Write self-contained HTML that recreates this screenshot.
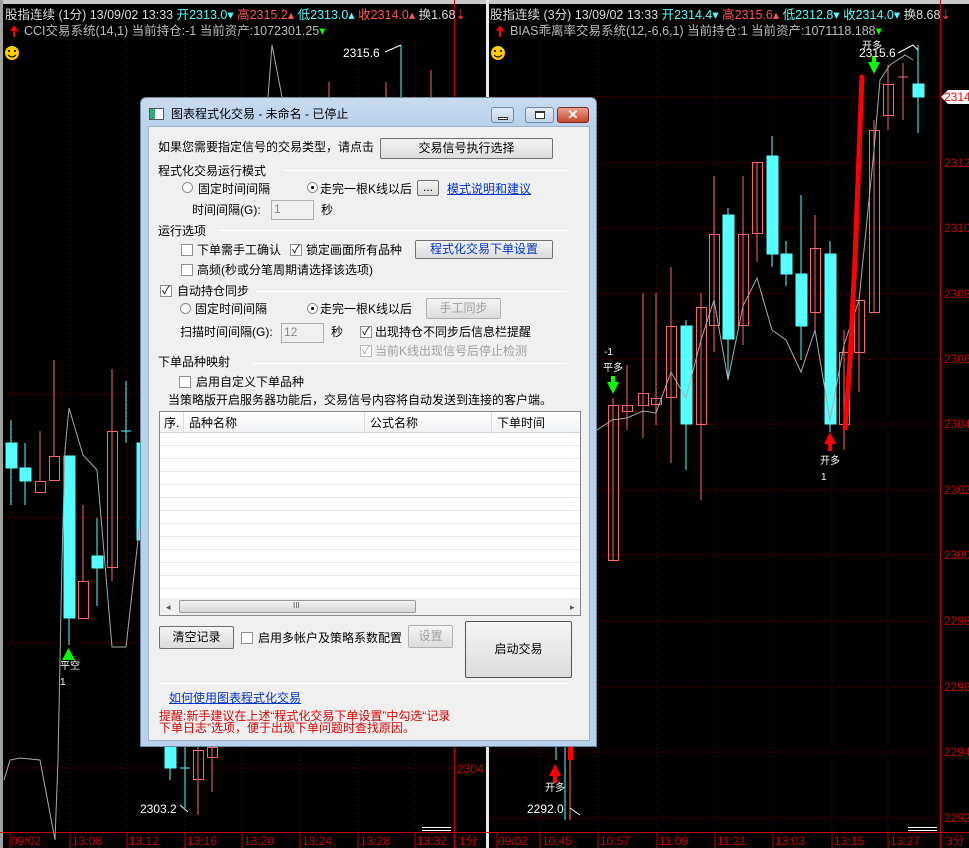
<!DOCTYPE html>
<html><head><meta charset="utf-8">
<style>
*{margin:0;padding:0;box-sizing:border-box}
body{width:969px;height:848px;overflow:hidden;background:#000;font-family:"Liberation Sans","Noto Sans CJK SC","WenQuanYi Zen Hei",sans-serif;font-size:12px;position:relative}
.a{position:absolute;white-space:nowrap;line-height:14px}
#dlg{position:absolute;left:140px;top:97px;width:457px;height:650px;background:linear-gradient(#c9dbee,#b9d1ea 30px,#b9d1ea);border:1px solid #6a8aa8;border-radius:6px 6px 0 0}
#cl{position:absolute;left:7px;top:28px;width:442px;height:615px;background:#f0f0f0;border:1px solid #9db3c9}
.btn{position:absolute;background:linear-gradient(#f4f4f4,#dcdcdc);border:1px solid #707070;border-radius:2px;text-align:center;line-height:18px;color:#000}
.dis{color:#a0a0a0;border-color:#adb2b5}
.cb{position:absolute;width:12px;height:12px;border:1px solid #8e8f8f;background:#fff;font-size:11px;line-height:10px;text-align:center;color:#000}
.rd{position:absolute;width:11px;height:11px;border:1px solid #8e8f8f;border-radius:50%;background:#fff}
.rd.on::after{content:"";position:absolute;left:3px;top:3px;width:3px;height:3px;border-radius:50%;background:#000}
.ln{position:absolute;height:1px;background:#c8c8c8;border-bottom:1px solid #fff}
.inp{position:absolute;background:#f0f0f0;border:1px solid #abadb3;color:#888;padding-left:2px;line-height:17px}
.lk{color:#0033cc;text-decoration:underline}
.wb{position:absolute;top:9px;height:16px;border:1px solid #6d8aa6;border-radius:3px;background:linear-gradient(#e3ecf6,#c0d2e6)}
</style></head><body>
<svg width="969" height="848" style="position:absolute;left:0;top:0">
<g stroke="#7a0000" stroke-dasharray="1,3" stroke-width="1">
<line x1="12" y1="40" x2="12" y2="830"/><line x1="70" y1="40" x2="70" y2="830"/><line x1="127" y1="40" x2="127" y2="830"/><line x1="185" y1="40" x2="185" y2="830"/><line x1="242" y1="40" x2="242" y2="830"/><line x1="300" y1="40" x2="300" y2="830"/><line x1="358" y1="40" x2="358" y2="830"/><line x1="415" y1="40" x2="415" y2="830"/>
<line x1="0" y1="394" x2="454" y2="394"/><line x1="0" y1="518" x2="454" y2="518"/><line x1="0" y1="643" x2="454" y2="643"/><line x1="0" y1="768" x2="454" y2="768"/>
<line x1="540" y1="40" x2="540" y2="830"/><line x1="598" y1="40" x2="598" y2="830"/><line x1="657" y1="40" x2="657" y2="830"/><line x1="715" y1="40" x2="715" y2="830"/><line x1="773" y1="40" x2="773" y2="830"/><line x1="832" y1="40" x2="832" y2="830"/><line x1="888" y1="40" x2="888" y2="830"/>
<line x1="490" y1="97" x2="940" y2="97"/><line x1="490" y1="163" x2="940" y2="163"/><line x1="490" y1="228" x2="940" y2="228"/><line x1="490" y1="294" x2="940" y2="294"/><line x1="490" y1="359" x2="940" y2="359"/><line x1="490" y1="424" x2="940" y2="424"/><line x1="490" y1="490" x2="940" y2="490"/><line x1="490" y1="555" x2="940" y2="555"/><line x1="490" y1="621" x2="940" y2="621"/><line x1="490" y1="687" x2="940" y2="687"/><line x1="490" y1="752" x2="940" y2="752"/><line x1="490" y1="818" x2="940" y2="818"/>
</g>
<rect x="0" y="0" width="969" height="4" fill="#c8c8c8"/>
<rect x="0" y="0" width="3" height="848" fill="#a0a0a0"/>
<rect x="486" y="0" width="3" height="848" fill="#e8e8e8"/>
<line x1="454.5" y1="0" x2="454.5" y2="848" stroke="#c00000"/>
<line x1="940.5" y1="0" x2="940.5" y2="848" stroke="#c00000"/>
<line x1="0" y1="832.5" x2="969" y2="832.5" stroke="#c00000"/>
<g stroke="#c00000"><line x1="10" y1="832" x2="10" y2="848"/><line x1="70" y1="832" x2="70" y2="848"/><line x1="127" y1="832" x2="127" y2="848"/><line x1="185" y1="832" x2="185" y2="848"/><line x1="242" y1="832" x2="242" y2="848"/><line x1="300" y1="832" x2="300" y2="848"/><line x1="358" y1="832" x2="358" y2="848"/><line x1="415" y1="832" x2="415" y2="848"/><line x1="497" y1="832" x2="497" y2="848"/><line x1="540" y1="832" x2="540" y2="848"/><line x1="598" y1="832" x2="598" y2="848"/><line x1="657" y1="832" x2="657" y2="848"/><line x1="715" y1="832" x2="715" y2="848"/><line x1="773" y1="832" x2="773" y2="848"/><line x1="832" y1="832" x2="832" y2="848"/><line x1="888" y1="832" x2="888" y2="848"/></g>
<g stroke="#fff" stroke-width="1"><line x1="422" y1="827.5" x2="451" y2="827.5"/><line x1="422" y1="830.5" x2="451" y2="830.5"/><line x1="908" y1="827.5" x2="937" y2="827.5"/><line x1="908" y1="830.5" x2="937" y2="830.5"/></g>
<!-- left candles -->
<g stroke="#5ff" fill="#5ff">
<line x1="11" y1="420" x2="11" y2="505"/><rect x="6" y="443" width="11" height="25"/>
<line x1="25" y1="443" x2="25" y2="505"/><rect x="20" y="468" width="11" height="13"/>
<line x1="69" y1="618" x2="69" y2="645"/><rect x="64" y="456" width="11" height="162"/>
<line x1="97" y1="518" x2="97" y2="606"/><rect x="92" y="556" width="11" height="12"/>
<line x1="126" y1="381" x2="126" y2="443"/><line x1="121" y1="431" x2="131" y2="431"/>
<rect x="137" y="443" width="3" height="97"/>
<line x1="170" y1="747" x2="170" y2="780"/><rect x="165" y="747" width="11" height="21"/>
<line x1="185" y1="747" x2="185" y2="808"/><line x1="180" y1="768" x2="190" y2="768"/>
<line x1="401" y1="45" x2="401" y2="97"/>
</g>
<g stroke="#f66" fill="none">
<line x1="40" y1="431" x2="40" y2="481"/><rect x="35.5" y="481.5" width="10" height="11"/>
<line x1="54" y1="360" x2="54" y2="456"/><rect x="49.5" y="456.5" width="10" height="24"/>
<line x1="83" y1="505" x2="83" y2="581"/><rect x="78.5" y="581.5" width="10" height="37"/>
<line x1="112" y1="369" x2="112" y2="581"/><rect x="107.5" y="431.5" width="10" height="136"/>
<line x1="198" y1="747" x2="198" y2="815"/><rect x="193.5" y="750.5" width="10" height="29"/>
<line x1="212" y1="747" x2="212" y2="792"/><rect x="207.5" y="747.5" width="10" height="10"/>
<line x1="329" y1="82" x2="329" y2="97"/><line x1="386" y1="82" x2="386" y2="97"/><line x1="431" y1="70" x2="431" y2="97"/>
</g>
<polyline fill="none" stroke="#aaa" points="4,780 10,760 20,758 40,760 55,840 58,760 62,560 65,450 69,408 83,455 97,470 112,647 126,647 138,540 140,520"/>
<polyline fill="none" stroke="#aaa" points="268,97 272,45 282,97"/>
<polyline fill="none" stroke="#fff" points="385,52 401,45"/>
<polyline fill="none" stroke="#fff" points="180,805 188,812"/>
<polygon points="62,660 75,660 68.5,648" fill="#0f0"/>
<!-- right candles -->
<g stroke="#f66" fill="none">
<line x1="613" y1="398" x2="613" y2="560"/><rect x="608.5" y="405.5" width="10" height="155"/>
<line x1="627" y1="365" x2="627" y2="430"/><rect x="622.5" y="405.5" width="10" height="6"/>
<line x1="643" y1="293" x2="643" y2="438"/><rect x="638.5" y="393.5" width="10" height="12"/>
<line x1="656" y1="293" x2="656" y2="425"/><rect x="651.5" y="398.5" width="10" height="6"/>
<line x1="671" y1="267" x2="671" y2="463"/><rect x="666.5" y="326.5" width="10" height="71"/>
<line x1="701" y1="293" x2="701" y2="500"/><rect x="696.5" y="307.5" width="10" height="117"/>
<line x1="714" y1="176" x2="714" y2="352"/><rect x="709.5" y="234.5" width="10" height="91"/>
<line x1="743" y1="176" x2="743" y2="345"/><rect x="738.5" y="234.5" width="10" height="91"/>
<line x1="757" y1="162" x2="757" y2="262"/><rect x="752.5" y="162.5" width="10" height="71"/>
<line x1="815" y1="215" x2="815" y2="330"/><rect x="810.5" y="248.5" width="10" height="64"/>
<line x1="844" y1="330" x2="844" y2="450"/><rect x="839.5" y="352.5" width="10" height="72"/>
<line x1="859" y1="300" x2="859" y2="392"/><rect x="854.5" y="300.5" width="10" height="52"/>
<line x1="874" y1="120" x2="874" y2="312"/><rect x="869.5" y="130.5" width="10" height="182"/>
<line x1="888" y1="65" x2="888" y2="130"/><rect x="883.5" y="84.5" width="10" height="31"/>
<line x1="903" y1="63" x2="903" y2="120"/><line x1="898" y1="77" x2="908" y2="77"/>
<line x1="570" y1="747" x2="570" y2="820"/>
</g>
<g stroke="#5ff" fill="#5ff">
<line x1="686" y1="320" x2="686" y2="470"/><rect x="681" y="326" width="11" height="98"/>
<line x1="728" y1="208" x2="728" y2="380"/><rect x="723" y="215" width="11" height="124"/>
<line x1="772" y1="136" x2="772" y2="267"/><rect x="767" y="156" width="11" height="98"/>
<line x1="786" y1="241" x2="786" y2="286"/><rect x="781" y="254" width="11" height="20"/>
<line x1="801" y1="195" x2="801" y2="360"/><rect x="796" y="274" width="11" height="52"/>
<line x1="830" y1="241" x2="830" y2="432"/><rect x="825" y="254" width="11" height="170"/>
<line x1="918" y1="45" x2="918" y2="133"/><rect x="913" y="84" width="11" height="13"/>
<line x1="556" y1="747" x2="556" y2="760"/><line x1="565" y1="747" x2="565" y2="820"/>
</g>
<rect x="568" y="747" width="5" height="13" fill="#f00"/>
<polyline fill="none" stroke="#aaa" points="597,430 612,420 627,418 643,411 656,413 671,372 686,398 701,340 714,300 728,380 743,306 757,278 772,330 786,340 801,372 815,330 830,420 844,345 859,300 874,150 880,80 890,65 905,55 913,60"/>
<polyline fill="none" stroke="#fff" points="898,53 913,45 918,50"/>
<polyline fill="none" stroke="#f00" stroke-width="5" points="845,430 850,360 855,260 862,75"/>
<polygon points="607,382 619,382 613,394" fill="#0f0"/><rect x="611" y="376" width="4" height="7" fill="#0f0"/>
<polygon points="868,62 880,62 874,74" fill="#0f0"/><rect x="872" y="56" width="4" height="7" fill="#0f0"/>
<polygon points="824,444 836,444 830,432" fill="#f00"/><rect x="828" y="443" width="4" height="8" fill="#f00"/>
<polygon points="549,776 561,776 555,764" fill="#f00"/><rect x="553" y="775" width="4" height="8" fill="#f00"/>
<polyline fill="none" stroke="#fff" points="570,808 580,815"/>
<polygon points="941,97 948,90 969,90 969,104 948,104" fill="#fff"/>
<circle cx="12" cy="53" r="7" fill="#fc0"/><circle cx="9" cy="51" r="1" fill="#000"/><circle cx="15" cy="51" r="1" fill="#000"/><path d="M8,55 Q12,59 16,55" stroke="#000" fill="none"/>
<circle cx="498" cy="53" r="7" fill="#fc0"/><circle cx="495" cy="51" r="1" fill="#000"/><circle cx="501" cy="51" r="1" fill="#000"/><path d="M494,55 Q498,59 502,55" stroke="#000" fill="none"/>
<path d="M14,37 L14,28 M11,31 L14,27 L17,31" stroke="#f00" stroke-width="2" fill="none"/>
<path d="M500,37 L500,28 M497,31 L500,27 L503,31" stroke="#f00" stroke-width="2" fill="none"/>
</svg>
<!-- headers -->
<div class="a" style="left:5px;top:8px;color:#ddd;font-size:12.5px">股指连续 (1分) 13/09/02 13:33 <span style="color:#5ff">开2313.0</span><span style="color:#5ff">▾</span> <span style="color:#f55">高2315.2▴</span> <span style="color:#5ff">低2313.0▴</span> <span style="color:#f55">收2314.0▴</span> 换1.68<span style="color:#f44">⇣</span></div>
<div class="a" style="left:24px;top:24px;color:#bbb;font-size:12.5px">CCI交易系统(14,1) 当前持仓:-1 当前资产:1072301.25<span style="color:#0f0">▾</span></div>
<div class="a" style="left:490px;top:8px;color:#ddd;font-size:12.5px">股指连续 (3分) 13/09/02 13:33 <span style="color:#5ff">开2314.4▾</span> <span style="color:#f55">高2315.6▴</span> <span style="color:#5ff">低2312.8▾</span> <span style="color:#5ff">收2314.0▾</span> 换8.68<span style="color:#f44">⇣</span></div>
<div class="a" style="left:510px;top:24px;color:#bbb;font-size:12.5px">BIAS乖离率交易系统(12,-6,6,1) 当前持仓:1 当前资产:1071118.188<span style="color:#0f0">▾</span></div>
<div class="a" style="left:343px;top:46px;color:#fff">2315.6</div>
<div class="a" style="left:859px;top:46px;color:#fff">2315.6</div>
<div class="a" style="left:862px;top:40px;color:#fff;font-size:10px">开多</div>
<div class="a" style="left:140px;top:802px;color:#fff">2303.2</div>
<div class="a" style="left:527px;top:802px;color:#fff">2292.0</div>
<div class="a" style="left:60px;top:660px;color:#fff;font-size:10px">平空</div>
<div class="a" style="left:60px;top:676px;color:#fff;font-size:10px">1</div>
<div class="a" style="left:604px;top:346px;color:#fff;font-size:10px">-1</div>
<div class="a" style="left:603px;top:362px;color:#fff;font-size:10px">平多</div>
<div class="a" style="left:820px;top:455px;color:#fff;font-size:10px">开多</div>
<div class="a" style="left:821px;top:471px;color:#fff;font-size:10px">1</div>
<div class="a" style="left:545px;top:782px;color:#fff;font-size:10px">开多</div>
<div class="a" style="left:457px;top:762px;color:#c00">2304</div>
<div class="a" style="left:944px;top:90px;color:#f00">2314</div>
<div class="a" style="left:944px;top:156px;color:#c00">2312</div><div class="a" style="left:944px;top:221px;color:#c00">2310</div><div class="a" style="left:944px;top:287px;color:#c00">2308</div><div class="a" style="left:944px;top:352px;color:#c00">2306</div><div class="a" style="left:944px;top:417px;color:#c00">2304</div><div class="a" style="left:944px;top:483px;color:#c00">2302</div><div class="a" style="left:944px;top:548px;color:#c00">2300</div><div class="a" style="left:944px;top:614px;color:#c00">2298</div><div class="a" style="left:944px;top:680px;color:#c00">2296</div><div class="a" style="left:944px;top:745px;color:#c00">2294</div><div class="a" style="left:944px;top:811px;color:#c00">2292</div>
<div style="position:absolute;left:0;top:834px;color:#c00;font-size:12px;line-height:14px">
<span class="a" style="left:11px;top:0">09/02</span><span class="a" style="left:72px;top:0">13:08</span><span class="a" style="left:129px;top:0">13:12</span><span class="a" style="left:187px;top:0">13:16</span><span class="a" style="left:244px;top:0">13:20</span><span class="a" style="left:302px;top:0">13:24</span><span class="a" style="left:360px;top:0">13:28</span><span class="a" style="left:417px;top:0">13:32</span><span class="a" style="left:459px;top:0">1分</span>
<span class="a" style="left:498px;top:0">09/02</span><span class="a" style="left:542px;top:0">10:45</span><span class="a" style="left:600px;top:0">10:57</span><span class="a" style="left:659px;top:0">11:09</span><span class="a" style="left:717px;top:0">11:21</span><span class="a" style="left:775px;top:0">13:03</span><span class="a" style="left:834px;top:0">13:15</span><span class="a" style="left:890px;top:0">13:27</span><span class="a" style="left:946px;top:0">3分</span></div>
<!-- dialog -->
<div id="dlg">
<div style="position:absolute;left:8px;top:10px;width:15px;height:12px;border:1px solid #555;background:linear-gradient(90deg,#3a7 40%,#fff 40%)"></div>
<div class="a" style="left:30px;top:9px;color:#000">图表程式化交易 - 未命名 - 已停止</div>
<div class="wb" style="left:350px;width:23px"><div style="position:absolute;left:6px;top:9px;width:10px;height:3px;background:#fff;border:1px solid #333"></div></div>
<div class="wb" style="left:384px;width:29px"><div style="position:absolute;left:9px;top:3px;width:10px;height:8px;border:1px solid #333;border-top-width:2px;background:#fff"></div></div>
<div class="wb" style="left:416px;width:32px;background:linear-gradient(#e8a08c,#c8452c);border-color:#7a2a1a;color:#fff;text-align:center;font-weight:bold;line-height:14px;font-size:13px">✕</div>
<div id="cl">
<div class="a" style="left:9px;top:13px">如果您需要指定信号的交易类型，请点击</div>
<div class="btn" style="left:231px;top:11px;width:173px;height:21px">交易信号执行选择</div>
<div class="a" style="left:9px;top:37px">程式化交易运行模式</div><div class="ln" style="left:134px;top:43px;width:286px"></div>
<div class="rd" style="left:33px;top:55px"></div><div class="a" style="left:49px;top:55px">固定时间间隔</div>
<div class="rd on" style="left:158px;top:55px"></div><div class="a" style="left:171px;top:55px">走完一根K线以后</div>
<div class="btn" style="left:268px;top:53px;width:22px;height:16px;line-height:12px">...</div>
<div class="a lk" style="left:298px;top:55px">模式说明和建议</div>
<div class="a" style="left:43px;top:76px">时间间隔(G):</div><div class="inp" style="left:122px;top:73px;width:43px;height:20px">1</div><div class="a" style="left:172px;top:76px">秒</div>
<div class="a" style="left:9px;top:97px">运行选项</div><div class="ln" style="left:70px;top:103px;width:350px"></div>
<div class="cb" style="left:32px;top:117px"></div><div class="a" style="left:48px;top:116px">下单需手工确认</div>
<div class="cb" style="left:141px;top:117px">✓</div><div class="a" style="left:157px;top:116px">锁定画面所有品种</div>
<div class="btn" style="left:266px;top:113px;width:138px;height:19px;line-height:16px;color:#0033cc">程式化交易下单设置</div>
<div class="cb" style="left:32px;top:137px"></div><div class="a" style="left:48px;top:136px">高频(秒或分笔周期请选择该选项)</div>
<div class="cb" style="left:11px;top:158px">✓</div><div class="a" style="left:28px;top:157px">自动持仓同步</div><div class="ln" style="left:107px;top:164px;width:311px"></div>
<div class="rd" style="left:31px;top:176px"></div><div class="a" style="left:46px;top:175px">固定时间间隔</div>
<div class="rd on" style="left:158px;top:176px"></div><div class="a" style="left:171px;top:175px">走完一根K线以后</div>
<div class="btn dis" style="left:277px;top:171px;width:75px;height:21px">手工同步</div>
<div class="a" style="left:31px;top:198px">扫描时间间隔(G):</div><div class="inp" style="left:132px;top:196px;width:43px;height:20px">12</div><div class="a" style="left:182px;top:198px">秒</div>
<div class="cb" style="left:211px;top:199px">✓</div><div class="a" style="left:226px;top:198px">出现持仓不同步后信息栏提醒</div>
<div class="cb" style="left:211px;top:218px;color:#999;border-color:#bbb">✓</div><div class="a" style="left:226px;top:217px;color:#a0a0a0">当前K线出现信号后停止检测</div>
<div class="a" style="left:9px;top:228px">下单品种映射</div><div class="ln" style="left:104px;top:236px;width:314px"></div>
<div class="cb" style="left:30px;top:249px"></div><div class="a" style="left:47px;top:248px">启用自定义下单品种</div>
<div class="a" style="left:19px;top:266px">当策略版开启服务器功能后，交易信号内容将自动发送到连接的客户端。</div>
<div style="position:absolute;left:10px;top:284px;width:422px;height:205px;background:#fff;border:1px solid #828790;overflow:hidden">
<div style="position:absolute;left:0;top:0;width:420px;height:21px;background:linear-gradient(#fff,#f1f2f4);border-bottom:1px solid #d5d5d5"></div>
<div class="a" style="left:4px;top:4px">序.</div><div class="a" style="left:29px;top:4px">品种名称</div><div class="a" style="left:210px;top:4px">公式名称</div><div class="a" style="left:337px;top:4px">下单时间</div>
<div style="position:absolute;left:23px;top:0;width:1px;height:186px;background:#ddd"></div>
<div style="position:absolute;left:204px;top:0;width:1px;height:186px;background:#ddd"></div>
<div style="position:absolute;left:331px;top:0;width:1px;height:186px;background:#ddd"></div>
<div style="position:absolute;left:0;top:21px;width:420px;height:165px;background:repeating-linear-gradient(#fff 0,#fff 12px,#eaeaea 12px,#eaeaea 13px)"></div>
<div style="position:absolute;left:0;top:186px;width:420px;height:17px;background:#f0f0f0"></div>
<div class="a" style="left:6px;top:188px;font-size:9px;color:#555">◂</div>
<div style="position:absolute;left:19px;top:188px;width:237px;height:13px;border:1px solid #999;border-radius:2px;background:linear-gradient(#f4f4f4,#d6d6d6)"></div>
<div class="a" style="left:133px;top:187px;font-size:8px;color:#555">III</div>
<div class="a" style="left:410px;top:188px;font-size:9px;color:#555">▸</div>
</div>
<div class="btn" style="left:10px;top:499px;width:75px;height:23px;line-height:20px">清空记录</div>
<div class="cb" style="left:92px;top:505px"></div><div class="a" style="left:109px;top:504px">启用多帐户及策略系数配置</div>
<div class="btn dis" style="left:259px;top:498px;width:45px;height:23px;line-height:20px">设置</div>
<div class="btn" style="left:316px;top:494px;width:107px;height:57px;line-height:54px;border-color:#555">启动交易</div>
<div class="ln" style="left:10px;top:556px;width:410px"></div>
<div class="a lk" style="left:20px;top:564px">如何使用图表程式化交易</div>
<div class="a" style="left:10px;top:583px;color:#e00000;line-height:12px">提醒:新手建议在上述“程式化交易下单设置”中勾选“记录<br>下单日志”选项，便于出现下单问题时查找原因。</div>
</div></div>
</body></html>
